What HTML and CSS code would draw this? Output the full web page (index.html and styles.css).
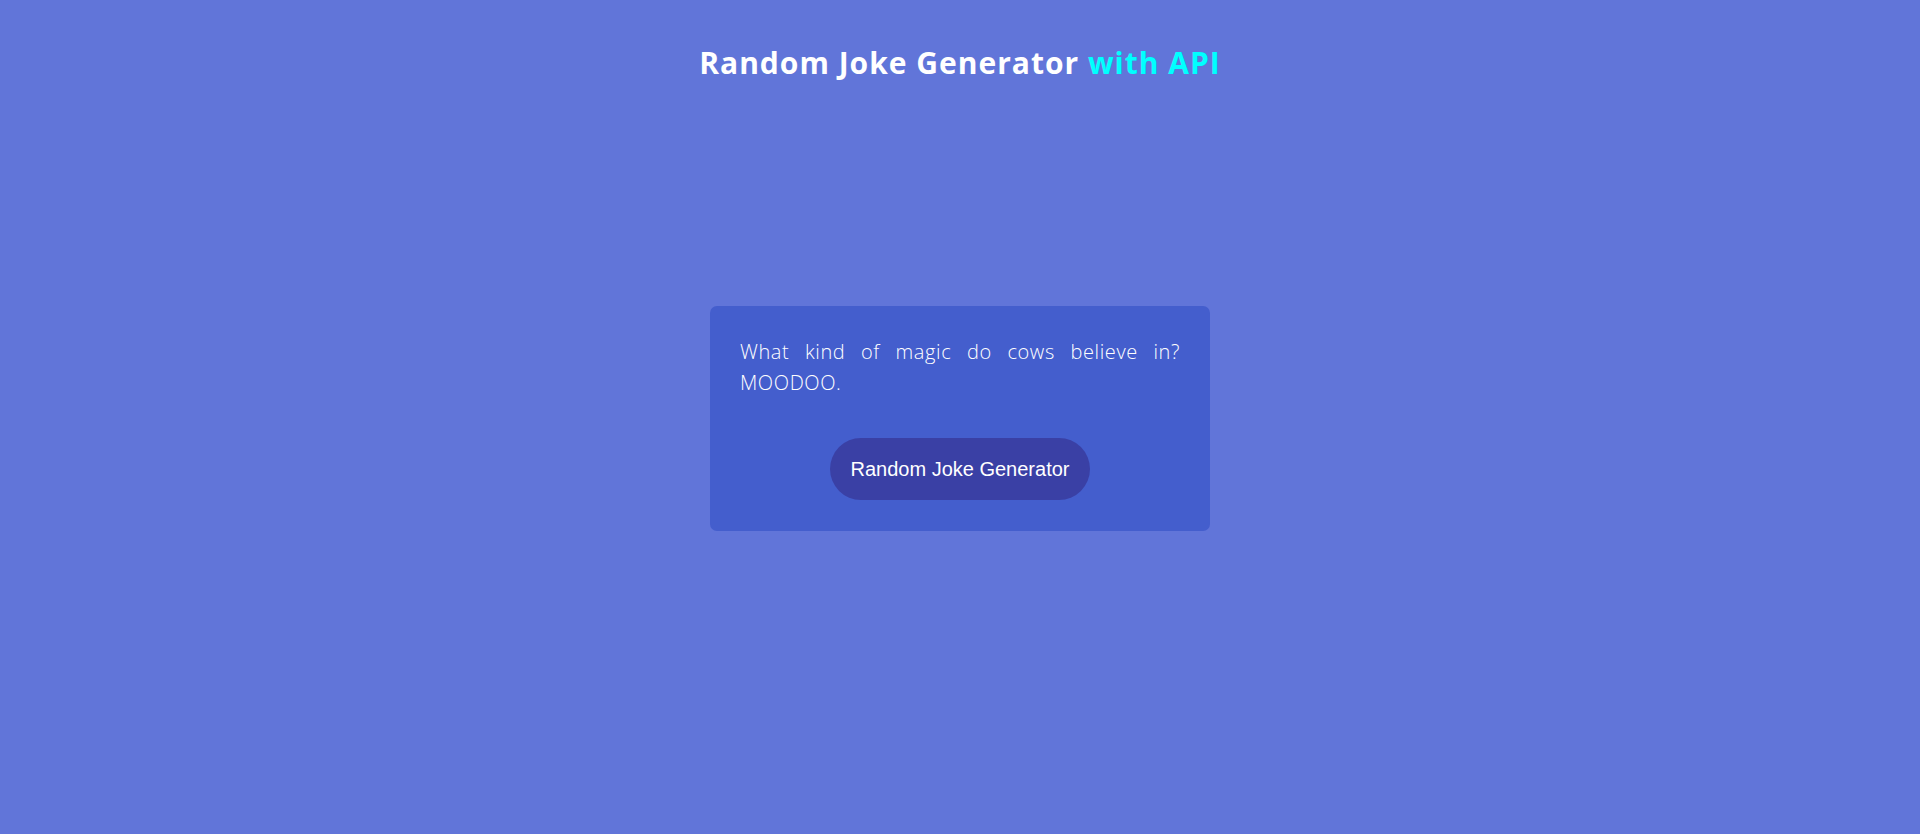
FILE: index.html
```html
<!DOCTYPE html>
<html lang="en">
<head>
<meta charset="utf-8">
<title>Random Joke Generator</title>
<link rel="stylesheet" href="styles.css">
</head>
<body>
<div class="page">
  <h1 class="title">Random Joke Generator <span class="accent">with API</span></h1>
  <main class="card">
    <p class="joke">What kind of magic do cows believe in? MOODOO.</p>
    <button class="btn" type="button">Random Joke Generator</button>
  </main>
</div>
</body>
</html>
```
FILE: styles.css
```css
html, body {
  margin: 0;
  padding: 0;
}
body {
  background: #6175d9;
  font-family: "Open Sans", "DejaVu Sans", sans-serif;
  color: #fff;
}
.page {
  height: 100vh;
  display: grid;
  grid-template-rows: 1fr auto 1fr;
  justify-items: center;
}
.title {
  align-self: start;
  margin: 46px 0 0;
  font-size: 30px;
  font-weight: 700;
  line-height: 34px;
  letter-spacing: 1px;
  color: #fff;
}
.accent {
  color: #00ffff;
}
.card {
  grid-row: 2;
  margin-top: 3px;
  width: 500px;
  box-sizing: border-box;
  padding: 30px 30px 31px;
  background: #445ecd;
  border-radius: 7px;
  display: flex;
  flex-direction: column;
  align-items: center;
}
.joke {
  align-self: stretch;
  margin: 0 0 40px;
  font-size: 20px;
  font-weight: 300;
  line-height: 31px;
  letter-spacing: 0.6px;
  text-align: justify;
  color: #fff;
}
.btn {
  width: 260px;
  height: 62px;
  border: none;
  border-radius: 31px;
  background: #3a40a5;
  color: #fff;
  font-family: "Liberation Sans", Arial, sans-serif;
  font-size: 20px;
  cursor: pointer;
}
```
